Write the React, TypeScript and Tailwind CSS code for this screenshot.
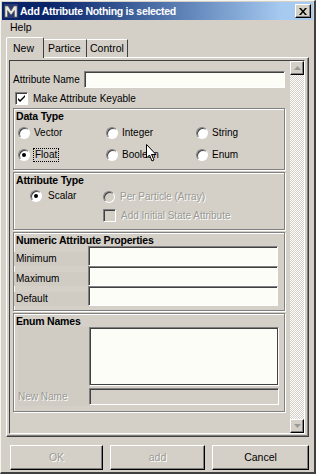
import React from 'react';

const font = "font-['Liberation_Sans',Arial,sans-serif]";
const dim = "text-[#9a9a94] [text-shadow:1px_1px_0_#fff]";

function Radio({ checked, disabled }: { checked?: boolean; disabled?: boolean }) {
  return (
    <span
      className={
        "w-[12px] h-[12px] shrink-0 rounded-full border border-t-[#808080] border-l-[#808080] border-b-[#ffffff] border-r-[#ffffff] shadow-[inset_1px_1px_0_#404040] flex items-center justify-center " +
        (disabled ? "bg-[#d4d0c8]" : "bg-white")
      }
    >
      {checked && <span className="w-[4px] h-[4px] rounded-full bg-black" />}
    </span>
  );
}

function Check({ checked, disabled }: { checked?: boolean; disabled?: boolean }) {
  return (
    <span
      className={
        "w-[13px] h-[13px] shrink-0 border border-t-[#808080] border-l-[#808080] border-b-[#ffffff] border-r-[#ffffff] shadow-[inset_1px_1px_0_#404040] flex items-center justify-center " +
        (disabled ? "bg-[#d4d0c8]" : "bg-white")
      }
    >
      {checked && (
        <svg width="9" height="9" viewBox="0 0 9 9">
          <path d="M1 4 L3 6 L8 1 L8 3 L3 8 L1 6 Z" fill="#000" />
        </svg>
      )}
    </span>
  );
}

function Field({ w, h = 20, disabled }: { w: string; h?: number; disabled?: boolean }) {
  return (
    <div
      className={
        w +
        " border border-t-[#808080] border-l-[#808080] border-b-[#ffffff] border-r-[#ffffff] shadow-[inset_1px_1px_0_#404040] " +
        (disabled ? "bg-[#d4d0c8]" : "bg-[#fdfdf8]")
      }
      style={{ height: h }}
    />
  );
}

function Frame({ title, className, children }: { title: string; className: string; children?: React.ReactNode }) {
  return (
    <div className={"ml-[3px] w-[272px] border border-[#808080] shadow-[1px_1px_0_#fff,inset_1px_1px_0_#fff] " + className}>
      <div className="pl-[2px] pt-[1px] text-[10.5px] leading-[12px] font-bold text-black whitespace-nowrap tracking-[-0.2px]">{title}</div>
      {children}
    </div>
  );
}

function Btn({ label, disabled, w }: { label: string; disabled?: boolean; w: string }) {
  return (
    <div
      className={
        w +
        " h-[25px] flex items-center justify-center border border-t-white border-l-white border-b-black border-r-black shadow-[inset_-1px_-1px_0_#808080] text-[10.5px] " +
        (disabled ? dim : "text-black")
      }
    >
      {label}
    </div>
  );
}

function ScrollArrow({ up }: { up?: boolean }) {
  return (
    <div className="w-[14px] h-[14px] bg-[#d4d0c8] border border-t-white border-l-white border-b-black border-r-black shadow-[inset_-1px_-1px_0_#808080] flex items-center justify-center">
      <svg width="7" height="4" viewBox="0 0 7 4">
        <path d={up ? "M3.5 0 L7 4 L0 4 Z" : "M0 0 L7 0 L3.5 4 Z"} fill="#9a9a94" />
      </svg>
    </div>
  );
}

export default function App() {
  return (
    <div className={"w-[316px] h-[474px] bg-[#d4d0c8] flex flex-col border-l border-t border-l-[#f4f4f0] border-t-[#f4f4f0] border-r-2 border-b-2 border-r-[#404040] border-b-[#404040] overflow-hidden relative " + font}>
      {/* title bar */}
      <div className="h-[18px] mx-[1px] mt-[1px] flex items-center bg-gradient-to-r from-[#0a246a] from-[15%] to-[#a6caf0] to-[90%] px-[2px]">
        <svg width="14" height="14" viewBox="0 0 14 14" className="shrink-0">
          <rect width="14" height="14" fill="#2a3a70" />
          <path d="M1 13 L1 2 L4 2 L7 7 L10 2 L13 2 L13 13 L10.5 13 L10.5 6.5 L7 11 L3.5 6.5 L3.5 13 Z" fill="#e8e8e0" stroke="#606060" strokeWidth="0.6" />
        </svg>
        <span className="ml-[2px] text-white font-bold text-[10.5px] leading-none tracking-[-0.3px] whitespace-nowrap">Add Attribute Nothing is selected</span>
        <div className="ml-auto w-[16px] h-[14px] bg-[#d4d0c8] border border-t-white border-l-white border-b-black border-r-black shadow-[inset_-1px_-1px_0_#808080] flex items-center justify-center">
          <svg width="8" height="7" viewBox="0 0 8 7">
            <path d="M0 0 L2 0 L4 2.5 L6 0 L8 0 L5 3.5 L8 7 L6 7 L4 4.5 L2 7 L0 7 L3 3.5 Z" fill="#000" />
          </svg>
        </div>
      </div>

      {/* menu */}
      <div className="h-[16px] flex items-center pl-[9px] text-[10.5px] text-black">Help</div>

      {/* tabs */}
      <div className="h-[21px] flex items-end pl-[5px] text-[10.5px] text-black">
        <div className="h-[21px] w-[38px] relative z-10 -mb-[1px] bg-[#d4d0c8] border border-b-0 border-t-white border-l-white border-r-[#404040] rounded-t-[2px] flex items-start pt-[3px] pl-[6px]">
          New
        </div>
        <div className="h-[18px] w-[43px] border border-b-0 border-t-white border-l-0 border-r-[#404040] flex items-center pl-[4px]">
          Partice
        </div>
        <div className="h-[18px] w-[41px] border border-b-0 border-t-white border-l-0 border-r-[#404040] flex items-center pl-[3px]">
          Control
        </div>
      </div>

      {/* tab panel */}
      <div className="h-[380px] mx-[5px] border border-t-white border-l-white border-b-[#404040] border-r-[#404040] shadow-[inset_-1px_-1px_0_#808080] p-[2px] pr-[3px]">
        <div className="h-full flex border border-t-[#404040] border-l-[#404040] border-b-white border-r-white">
          {/* scroll content */}
          <div className="flex-1 flex flex-col pt-[9px] text-[10px] text-black whitespace-nowrap">
            <div className="flex items-center h-[18px]">
              <span className="w-[74px] pl-[3px]">Attribute Name</span>
              <Field w="w-[201px]" h={17} />
            </div>
            <div className="mt-[4px] flex items-center h-[13px] pl-[5px] gap-[5px]">
              <Check checked />
              <span>Make Attribute Keyable</span>
            </div>

            <Frame title="Data Type" className="mt-[3px] h-[62px]">
              <div className="grid grid-cols-[88px_90px_1fr] gap-y-[9px] pl-[4px] pt-[4px]">
                <div className="flex items-center gap-[4px] h-[13px]"><Radio /><span>Vector</span></div>
                <div className="flex items-center gap-[4px] h-[13px]"><Radio /><span>Integer</span></div>
                <div className="flex items-center gap-[4px] h-[13px]"><Radio /><span>String</span></div>
                <div className="flex items-center gap-[4px] h-[13px]">
                  <Radio checked />
                  <span className="outline-1 outline-dotted outline-black px-[1px] leading-[12px]">Float</span>
                </div>
                <div className="flex items-center gap-[4px] h-[13px]"><Radio /><span>Boolean</span></div>
                <div className="flex items-center gap-[4px] h-[13px]"><Radio /><span>Enum</span></div>
              </div>
            </Frame>

            <Frame title="Attribute Type" className="mt-[2px] h-[58px]">
              <div className="flex pt-[4px]">
                <div className="w-[75px] pl-[16px] flex items-start gap-[6px] h-[13px]">
                  <Radio checked />
                  <span className="leading-[12px]">Scalar</span>
                </div>
                <div className="flex flex-col gap-[6px] pl-[14px]">
                  <div className={"flex items-center gap-[5px] h-[13px] " + dim}>
                    <Radio disabled />
                    <span>Per Particle (Array)</span>
                  </div>
                  <div className={"flex items-center gap-[5px] h-[13px] " + dim}>
                    <Check disabled />
                    <span>Add Initial State Attribute</span>
                  </div>
                </div>
              </div>
            </Frame>

            <Frame title="Numeric Attribute Properties" className="mt-[2px] h-[79px]">
              <div className="flex flex-col">
                {['Minimum', 'Maximum', 'Default'].map((l) => (
                  <div key={l} className="flex items-end h-[20px]">
                    <span className="w-[74px] pl-[2px] leading-[14px] bg-[#d0ccc4]">{l}</span>
                    <Field w="w-[190px]" h={20} />
                  </div>
                ))}
              </div>
            </Frame>

            <Frame title="Enum Names" className="mt-[2px] h-[99px]">
              <div className="flex">
                <div className="w-[75px] pl-[4px] flex flex-col">
                  <div className="h-[59px] bg-[#d0ccc4]" />
                  <div className={"h-[20px] flex items-center bg-[#d0ccc4] " + dim}>New Name</div>
                </div>
                <div className="flex flex-col gap-[2px]">
                  <div className="w-[190px] h-[59px] bg-[#fdfdf8] border border-t-[#808080] border-l-[#808080] border-b-[#ffffff] border-r-[#ffffff] shadow-[inset_1px_1px_0_#404040,inset_-1px_-1px_0_#404040]" />
                  <Field w="w-[190px]" h={17} disabled />
                </div>
              </div>
            </Frame>
          </div>

          {/* scrollbar */}
          <div className="w-[14px] flex flex-col bg-[repeating-conic-gradient(#ffffff_0_25%,#d4d0c8_0_50%)] bg-[length:2px_2px]">
            <ScrollArrow up />
            <div className="flex-1" />
            <ScrollArrow />
          </div>
        </div>
      </div>

      {/* buttons */}
      <div className="mt-[8px] flex pl-[9px] gap-[7px]">
        <Btn label="OK" disabled w="w-[93px]" />
        <Btn label="add" disabled w="w-[95px]" />
        <Btn label="Cancel" w="w-[97px]" />
      </div>

      {/* mouse pointer */}
      <svg className="absolute left-[145px] top-[143px]" width="11" height="18" viewBox="0 0 11 18">
        <path d="M0.5 0.5 L0.5 14 L3.5 11 L6 17 L8 16 L5.5 10.5 L10 10.5 Z" fill="#fff" stroke="#000" strokeWidth="1" />
      </svg>
    </div>
  );
}
